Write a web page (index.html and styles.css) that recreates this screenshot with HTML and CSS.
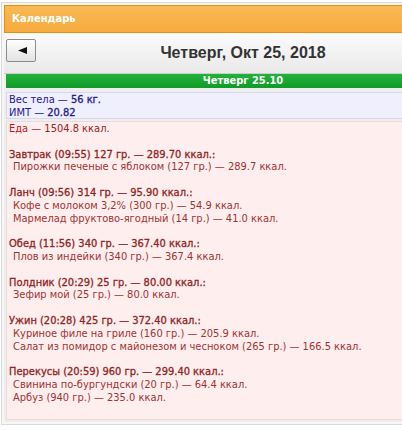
FILE: index.html
```html
<!DOCTYPE html>
<html lang="ru">
<head>
    <meta charset="UTF-8">
    <title>Календарь</title>
    <link rel="stylesheet" href="styles.css">
</head>
<body>
<div class="calendar">
    <div class="cal-head">Календарь</div>
    <div class="toolbar">
        <div class="nav">
            <span class="btn-prev"><svg width="9" height="7" viewBox="0 0 9 7"><polygon points="0,3.5 9,0 9,7" fill="#111"/></svg></span>
        </div>
        <div class="cal-title">Четверг, Окт 25, 2018</div>
        <div></div>
    </div>
    <div class="day">
        <div class="day-bar">Четверг 25.10</div>
        <div class="body-box">
            <div>Вес тела — <b>56 кг.</b></div>
            <div>ИМТ — <b>20.82</b></div>
        </div>
        <div class="food-box">
            <div class="total"><span class="total-label">Еда</span> — <b>1504.8 ккал.</b></div>

            <div class="meal">
                <div class="meal-title">Завтрак (09:55) 127 гр. — 289.70 ккал.:</div>
                <div class="item">Пирожки печеные с яблоком (127 гр.) — 289.7 ккал.</div>
            </div>
            <div class="meal">
                <div class="meal-title">Ланч (09:56) 314 гр. — 95.90 ккал.:</div>
                <div class="item">Кофе с молоком 3,2% (300 гр.) — 54.9 ккал.</div>
                <div class="item">Мармелад фруктово-ягодный (14 гр.) — 41.0 ккал.</div>
            </div>
            <div class="meal">
                <div class="meal-title">Обед (11:56) 340 гр. — 367.40 ккал.:</div>
                <div class="item">Плов из индейки (340 гр.) — 367.4 ккал.</div>
            </div>
            <div class="meal">
                <div class="meal-title">Полдник (20:29) 25 гр. — 80.00 ккал.:</div>
                <div class="item">Зефир мой (25 гр.) — 80.0 ккал.</div>
            </div>
            <div class="meal">
                <div class="meal-title">Ужин (20:28) 425 гр. — 372.40 ккал.:</div>
                <div class="item">Куриное филе на гриле (160 гр.) — 205.9 ккал.</div>
                <div class="item">Салат из помидор с майонезом и чесноком (265 гр.) — 166.5 ккал.</div>
            </div>
            <div class="meal">
                <div class="meal-title">Перекусы (20:59) 960 гр. — 299.40 ккал.:</div>
                <div class="item">Свинина по-бургундски (20 гр.) — 64.4 ккал.</div>
                <div class="item">Арбуз (940 гр.) — 235.0 ккал.</div>
            </div>
        </div>
    </div>
</div>
</body>
</html>
```

FILE: styles.css
```css
* {
    box-sizing: border-box;
    margin: 0;
    padding: 0;
}

body {
    background: #fff;
    overflow: hidden;
    font-family: "DejaVu Sans Condensed", Tahoma, "DejaVu Sans", sans-serif;
    font-size: 11px;
}

.calendar {
    width: 484px;
    margin: 2px 0 0 1px;
    padding: 2px;
    border: 1px solid #dadada;
    background: #f6f6f6;
}

.cal-head {
    height: 28px;
    padding-left: 7px;
    line-height: 26px;
    border: 1px solid #e98f0d;
    background: linear-gradient(#f8b953, #f6ac3f);
    color: #fff;
    font-weight: bold;
}

.toolbar {
    display: grid;
    grid-template-columns: 1fr auto 1fr;
    height: 41px;
    padding: 6px 2px 0;
    border-bottom: 1px solid #cdcdcd;
    background: linear-gradient(#fbfbfb, #e9e9e9);
}

.btn-prev {
    display: flex;
    align-items: center;
    justify-content: center;
    width: 30px;
    height: 23px;
    padding-left: 2px;
    border: 1px solid #8c8c8c;
    border-radius: 2px;
    background: linear-gradient(#fefefe, #e3e3e3);
}

.cal-title {
    padding-top: 5px;
    font-family: "Liberation Sans", Arial, sans-serif;
    font-size: 16px;
    font-weight: bold;
    color: #333;
}

.day {
    padding: 0 2px 2px;
    background: #eeeeee;
}

.day-bar {
    height: 14px;
    line-height: 14px;
    text-align: center;
    color: #fff;
    font-weight: bold;
    background: linear-gradient(#20b33b, #119a27);
}

.body-box {
    margin-top: 4px;
    padding: 1px 2px;
    height: 27px;
    line-height: 12.8px;
    border: 1px solid #d6d6ee;
    background: #efeffe;
    color: #20208f;
}

.body-box b {
    font-weight: normal;
    -webkit-text-stroke: 0.3px #20208f;
}

.food-box {
    margin-top: 2px;
    padding: 1px 2px 14px;
    line-height: 12.8px;
    border: 1px solid #eed9d9;
    background: #ffeeee;
    color: #a03434;
}

.total-label {
    color: #c41414;
}

.total b {
    font-weight: normal;
    color: #a02020;
}

.meal {
    margin-top: 12.8px;
}

.meal-title {
    color: #8e2626;
    -webkit-text-stroke: 0.3px #8e2626;
}

.item {
    padding-left: 4px;
}
```
